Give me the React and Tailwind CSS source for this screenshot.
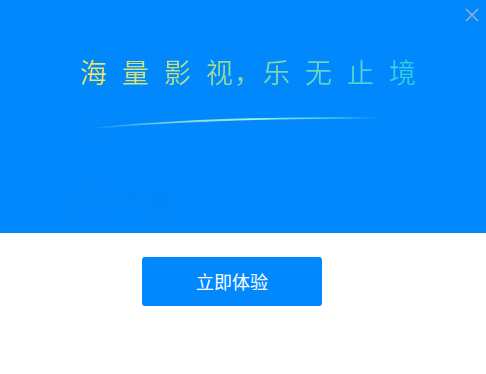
import React from "react";

export default function App() {
  return (
    <div className="w-[486px] h-[374px] bg-white overflow-hidden" style={{ fontFamily: '"Noto Sans CJK SC", "Noto Sans", sans-serif' }}>
      <div className="relative h-[233px] bg-[#0188fd]">
        <button className="absolute right-[6px] top-[7px] w-[16px] h-[16px] flex items-center justify-center">
          <svg width="14" height="14" viewBox="0 0 14 14">
            <path d="M1 1L13 13M13 1L1 13" stroke="#95acd4" strokeWidth="1.6" />
          </svg>
        </button>
        <div className="pt-[52px] pl-[80px]">
          <div className="flex h-[40px] w-[340px] bg-gradient-to-r from-[#fbe85a] via-[#8fdc96] via-45% to-[#22cde8] bg-clip-text text-transparent text-[27px] leading-[40px] font-[350]">
            <span className="block shrink-0 w-[42px]">海</span>
            <span className="block shrink-0 w-[42px]">量</span>
            <span className="block shrink-0 w-[42px]">影</span>
            <span className="block shrink-0 w-[28px]">视</span>
            <span className="block shrink-0 w-[29px] [font-feature-settings:'halt']">，</span>
            <span className="block shrink-0 w-[42px]">乐</span>
            <span className="block shrink-0 w-[42px]">无</span>
            <span className="block shrink-0 w-[42px]">止</span>
            <span className="block shrink-0 w-[28px]">境</span>
          </div>
        </div>
        <svg className="absolute left-[80px] top-[110px]" width="320" height="24" viewBox="0 0 320 24">
          <defs>
            <linearGradient id="arc" x1="0" y1="0" x2="1" y2="0">
              <stop offset="0" stopColor="#7fe0d8" stopOpacity="0" />
              <stop offset="0.35" stopColor="#8fe6c8" stopOpacity="0.8" />
              <stop offset="0.55" stopColor="#9ef0d8" stopOpacity="1" />
              <stop offset="0.85" stopColor="#4fd8e8" stopOpacity="0.6" />
              <stop offset="1" stopColor="#3fd0f0" stopOpacity="0" />
            </linearGradient>
          </defs>
          <path d="M6 19 Q 120 6 305 8 Q 120 8 6 19 Z" fill="url(#arc)" stroke="url(#arc)" strokeWidth="1.2" />
        </svg>
        <div className="absolute left-[72px] top-[186px] text-[18px] text-[#0486f9] tracking-[8px]">
          看片神器
        </div>
      </div>
      <div className="flex pt-[24px] pl-[142px]">
        <button className="w-[180px] h-[49px] rounded-[3px] bg-[#0188fd] text-white text-[18px] flex items-center justify-center">
          立即体验
        </button>
      </div>
    </div>
  );
}
